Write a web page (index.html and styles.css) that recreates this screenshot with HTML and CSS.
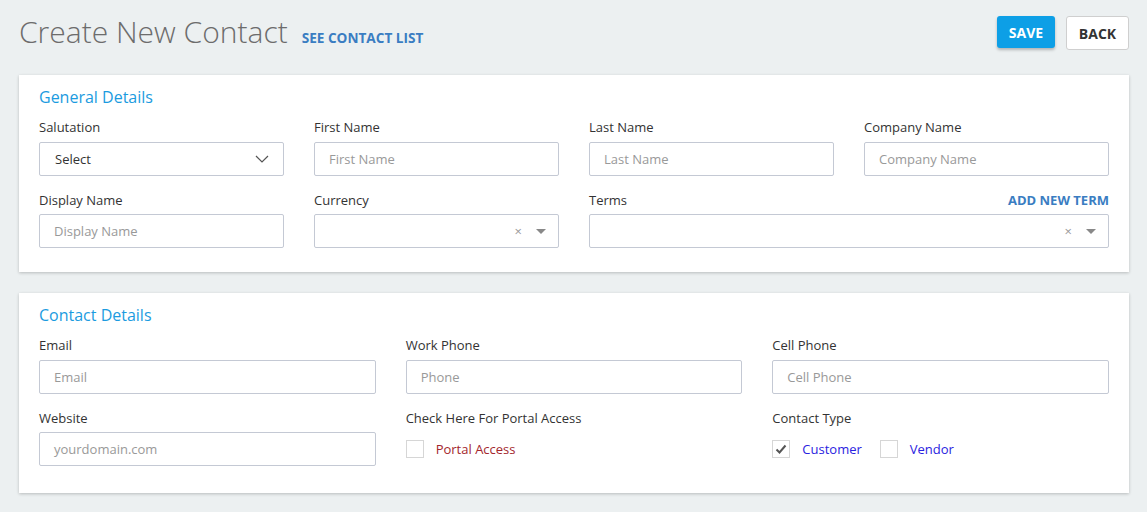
FILE: index.html
```html
<!DOCTYPE html>
<html>
<head>
<meta charset="utf-8">
<link rel="stylesheet" href="styles.css">
</head>
<body>
<div class="page">
  <header class="topbar">
    <div class="title-wrap">
      <h1 class="title">Create New Contact</h1>
      <a class="see-list">SEE CONTACT LIST</a>
    </div>
    <div class="actions">
      <button class="btn btn-save">SAVE</button>
      <button class="btn btn-back">BACK</button>
    </div>
  </header>

  <section class="card">
    <h2 class="card-title">General Details</h2>
    <div class="grid grid-4">
      <div class="field">
        <label class="lbl">Salutation</label>
        <div class="input select">
          <span class="val">Select</span>
          <svg class="chev" width="14" height="8" viewBox="0 0 14 8"><path d="M1 1l6 6 6-6" fill="none" stroke="#555" stroke-width="1.2"/></svg>
        </div>
      </div>
      <div class="field">
        <label class="lbl">First Name</label>
        <div class="input"><span class="ph">First Name</span></div>
      </div>
      <div class="field">
        <label class="lbl">Last Name</label>
        <div class="input"><span class="ph">Last Name</span></div>
      </div>
      <div class="field">
        <label class="lbl">Company Name</label>
        <div class="input"><span class="ph">Company Name</span></div>
      </div>
      <div class="field row2">
        <label class="lbl">Display Name</label>
        <div class="input"><span class="ph">Display Name</span></div>
      </div>
      <div class="field row2">
        <label class="lbl">Currency</label>
        <div class="input select2">
          <span class="clear">×</span><span class="caret"></span>
        </div>
      </div>
      <div class="field row2 span-2">
        <div class="lbl-row">
          <label class="lbl">Terms</label>
          <a class="add-term">ADD NEW TERM</a>
        </div>
        <div class="input select2">
          <span class="clear">×</span><span class="caret"></span>
        </div>
      </div>
    </div>
  </section>

  <section class="card card-2">
    <h2 class="card-title">Contact Details</h2>
    <div class="grid grid-3">
      <div class="field">
        <label class="lbl">Email</label>
        <div class="input"><span class="ph">Email</span></div>
      </div>
      <div class="field">
        <label class="lbl">Work Phone</label>
        <div class="input"><span class="ph">Phone</span></div>
      </div>
      <div class="field">
        <label class="lbl">Cell Phone</label>
        <div class="input"><span class="ph">Cell Phone</span></div>
      </div>
      <div class="field row2">
        <label class="lbl">Website</label>
        <div class="input"><span class="ph">yourdomain.com</span></div>
      </div>
      <div class="field row2">
        <label class="lbl">Check Here For Portal Access</label>
        <div class="checks">
          <span class="check"><span class="box"></span><span class="ck-text red">Portal Access</span></span>
        </div>
      </div>
      <div class="field row2">
        <label class="lbl">Contact Type</label>
        <div class="checks">
          <span class="check"><span class="box"><svg width="12" height="10" viewBox="0 0 12 10"><path d="M1.5 5.5l3 3 6-7" fill="none" stroke="#555" stroke-width="2"/></svg></span><span class="ck-text blue">Customer</span></span>
          <span class="check"><span class="box"></span><span class="ck-text blue">Vendor</span></span>
        </div>
      </div>
    </div>
  </section>
</div>
</body>
</html>
```
FILE: styles.css
```css
* { box-sizing: border-box; }
html, body { margin: 0; padding: 0; }
body {
  background: #ecf0f1;
  font-family: "Open Sans", "Liberation Sans", sans-serif;
  color: #333;
  width: 1147px;
  height: 512px;
  overflow: hidden;
}
.page { padding: 16px 18px 0 19px; }
.topbar {
  display: flex;
  justify-content: space-between;
  align-items: flex-start;
  height: 59px;
}
.title-wrap { display: flex; align-items: baseline; gap: 14px; margin-top: -2px; }
.title {
  margin: 0;
  font-weight: 300;
  font-size: 30px;
  line-height: 36px;
  color: #6c6c6c;
}
.see-list {
  font-size: 13.6px;
  font-weight: 700;
  color: #3a7dc2;
}
.actions { display: flex; gap: 11px; }
.btn {
  font-family: "Open Sans", "Liberation Sans", sans-serif;
  font-weight: 700;
  font-size: 14px;
  border-radius: 3px;
  cursor: pointer;
  padding: 0;
}
.btn-save {
  width: 58px;
  height: 32px;
  background: #0d9fe6;
  color: #fff;
  border: none;
  box-shadow: 0 2px 3px rgba(0,0,0,0.25);
}
.btn-back {
  width: 63px;
  height: 34px;
  background: #fff;
  color: #333;
  border: 1px solid #cfcfcf;
}
.card {
  background: #fff;
  width: 1110px;
  padding: 11px 20px 24px;
  box-shadow: 0 1px 3px rgba(0,0,0,0.22);
}
.card-2 { margin-top: 21px; padding-bottom: 27px; }
.card-title {
  margin: 0 0 10px;
  font-size: 16px;
  line-height: 22px;
  font-weight: 400;
  color: #1b9be0;
}
.grid { display: grid; column-gap: 30px; row-gap: 15px; }
.grid-4 { grid-template-columns: repeat(4, 1fr); }
.grid-3 { grid-template-columns: repeat(3, 1fr); }
.span-2 { grid-column: span 2; }
.field { display: flex; flex-direction: column; }
.lbl {
  font-size: 13px;
  line-height: 18px;
  color: #333;
  margin-bottom: 6px;
}
.row2 .lbl { margin-bottom: 5px; }
.lbl-row { display: flex; justify-content: space-between; align-items: baseline; }
.add-term {
  font-size: 13px;
  font-weight: 700;
  color: #3a7dc2;
}
.input {
  height: 34px;
  border: 1px solid #c4c9d4;
  border-radius: 2px;
  display: flex;
  align-items: center;
  padding: 0 14px;
  font-size: 13px;
}
.ph { color: #999; }
.select { justify-content: space-between; padding-left: 15px; padding-right: 14px; }
.select .val { color: #333; }
.select2 { justify-content: flex-end; padding-right: 12px; }
.clear { color: #999; font-size: 13px; margin-right: 14px; line-height: 1; }
.caret {
  width: 0; height: 0;
  border-left: 5px solid transparent;
  border-right: 5px solid transparent;
  border-top: 5px solid #888;
}
.checks { display: flex; gap: 18px; align-items: center; height: 34px; }
.check { display: flex; align-items: center; }
.box {
  width: 18px; height: 18px;
  border: 1px solid #d6d6d6;
  display: flex; align-items: center; justify-content: center;
  margin-right: 12px;
}
.ck-text { font-size: 13px; }
.red { color: #a3262d; }
.blue { color: #2a22e0; }
```
